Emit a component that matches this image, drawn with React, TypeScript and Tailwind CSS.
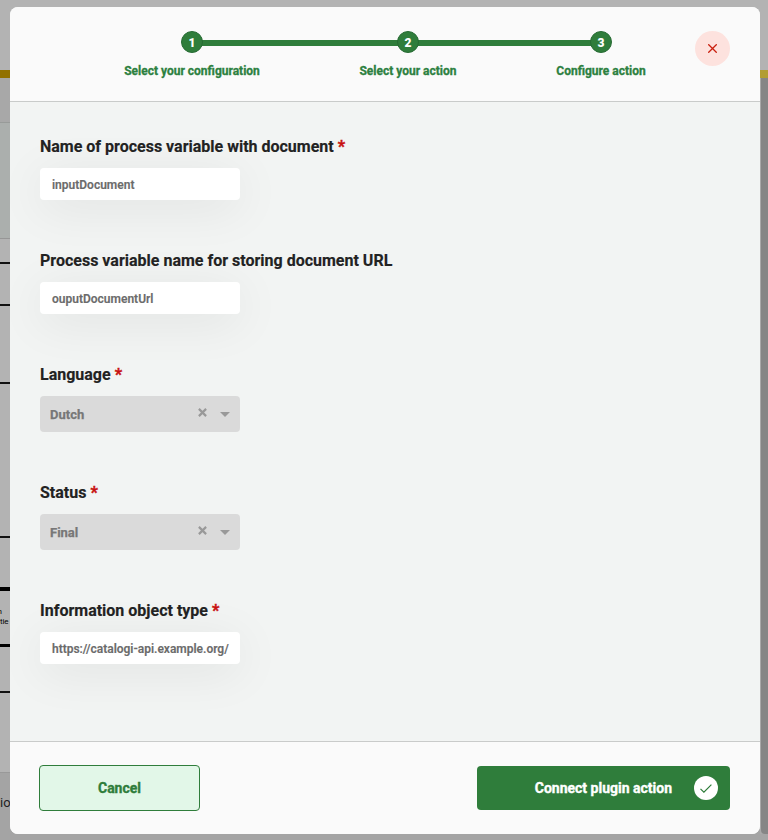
import React from "react";

const Step = ({ n, label, className }: { n: number; label: string; className: string }) => (
  <div className={`relative flex flex-col items-center ${className}`}>
    <div className="flex h-[22px] w-[22px] items-center justify-center rounded-full border border-[#276b34] bg-[#2f7d3b] pt-px text-[12px] leading-none font-black text-white">{n}</div>
    <div className="mt-[10px] text-[12px] leading-4 font-bold whitespace-nowrap text-[#2c8040] [-webkit-text-stroke:0.3px]">{label}</div>
  </div>
);

const Label = ({ text, required }: { text: string; required?: boolean }) => (
  <div className="h-6 pt-px text-[16px] leading-6 font-bold whitespace-nowrap text-[#222] [-webkit-text-stroke:0.15px]">
    <span>{text}</span>
    {required && <span className="ml-1 font-extrabold text-[#c81010] [-webkit-text-stroke:0.4px]">*</span>}
  </div>
);

const Input = ({ value, className = "" }: { value: string; className?: string }) => (
  <div className="mt-[10px] flex h-8 w-[200px] items-center rounded bg-white px-3 shadow-[0_8px_48px_rgba(0,0,0,0.08)]">
    <span className={`pt-px text-[12px] leading-4 font-semibold whitespace-nowrap text-[#6b6b6b] [-webkit-text-stroke:0.15px] ${className}`}>{value}</span>
  </div>
);

const Select = ({ value }: { value: string }) => (
  <div className="mt-[10px] flex h-9 w-[200px] items-center rounded bg-[#dadada] px-[10px]">
    <span className="flex-1 pt-px text-[13px] leading-4 font-bold text-[#777] [-webkit-text-stroke:0.25px]">{value}</span>
    <svg className="mr-[13px] -mt-[3px]" width="9" height="9" viewBox="0 0 9 9" stroke="#999" strokeWidth="2.2">
      <path d="M.9.9l7.2 7.2M8.1.9L.9 8.1" />
    </svg>
    <svg width="10" height="5" viewBox="0 0 10 5" fill="#999">
      <path d="M0 0h10L5 5z" />
    </svg>
  </div>
);

const Backdrop = () => (
  <div className="flex h-full justify-between bg-[#a5a5a5]">
    <div className="flex h-full flex-1 flex-col overflow-hidden bg-[#b3b3b3]">
      <div className="h-[70px] shrink-0" />
      <div className="h-2 shrink-0 bg-[#927100]" />
      <div className="h-[44px] shrink-0 bg-[#a8a8a8]" />
      <div className="h-px shrink-0 bg-[#989b99]" />
      <div className="h-[115px] shrink-0 bg-[#abafad]" />
      <div className="h-px shrink-0 bg-[#969696]" />
      <div className="h-[23px] shrink-0" />
      <div className="h-[2px] shrink-0 bg-[#111]" />
      <div className="h-[40px] shrink-0" />
      <div className="h-[2px] shrink-0 bg-[#111]" />
      <div className="h-[76px] shrink-0" />
      <div className="h-[2px] shrink-0 bg-[#111]" />
      <div className="h-[152px] shrink-0" />
      <div className="h-[2px] shrink-0 bg-[#111]" />
      <div className="h-[49px] shrink-0" />
      <div className="h-[4px] shrink-0 bg-black" />
      <div className="flex h-[53px] shrink-0 flex-col pt-[16px] text-[8px] leading-[10px] text-black">
        <div className="flex w-[2px] justify-end">n</div>
        <div className="w-[9px] -tracking-[0.1px]">tie</div>
      </div>
      <div className="h-[3px] shrink-0 bg-black" />
      <div className="h-[44px] shrink-0" />
      <div className="h-[2px] shrink-0 bg-[#111]" />
      <div className="h-[79px] shrink-0" />
      <div className="h-px shrink-0 bg-[#999]" />
      <div className="flex-1 bg-[#a4a4a4] pt-[22px] text-[13px] leading-4 text-[#222]">io</div>
    </div>
    <div className="flex w-2 flex-col">
      <div className="h-[70px] bg-[#b3b3b3]" />
      <div className="h-2 bg-[#b29d34]" />
      <div className="flex h-[756px] bg-[#a9a9a9] pl-px">
        <div className="flex-1 rounded-bl bg-[#868686]" />
      </div>
    </div>
  </div>
);

export default function App() {
  return (
    <div className="relative h-[840px] w-[768px] overflow-hidden font-['Roboto',sans-serif]">
      <Backdrop />
      <div className="absolute top-[7px] left-[10px] flex h-[827px] w-[750px] flex-col overflow-hidden rounded-lg bg-[#f2f4f3]">
        <header className="flex h-[95px] shrink-0 justify-between border-b border-[#c9cbca] bg-[#fafafa] pt-6 pr-[30px]">
          <div className="relative ml-[113px] flex w-[524px]">
            <div className="absolute top-[9px] right-[46px] left-[68px] h-[6px] bg-[#2f7d3b]" />
            <Step n={1} label="Select your configuration" className="w-[138px]" />
            <Step n={2} label="Select your action" className="ml-[98px] w-[98px]" />
            <Step n={3} label="Configure action" className="ml-[98px] w-[92px]" />
          </div>
          <div className="flex h-[35px] w-[35px] items-center justify-center rounded-full bg-[#fde2de]">
            <svg width="9" height="9" viewBox="0 0 9 9" stroke="#c9200f" strokeWidth="1.3">
              <path d="M.3.3l8.4 8.4M8.7.3L.3 8.7" />
            </svg>
          </div>
        </header>
        <main className="flex-1 px-[30px] pt-8">
          <div className="h-[114px]"><Label text="Name of process variable with document" required /><Input value="inputDocument" /></div>
          <div className="h-[114px]"><Label text="Process variable name for storing document URL" /><Input value="ouputDocumentUrl" /></div>
          <div className="h-[118px]"><Label text="Language" required /><Select value="Dutch" /></div>
          <div className="h-[118px]"><Label text="Status" required /><Select value="Final" /></div>
          <div><Label text="Information object type" required /><Input value="https://catalogi-api.example.org/" className="-tracking-[0.02px]" /></div>
        </main>
        <footer className="flex h-[93px] shrink-0 items-center justify-between border-t border-[#c9cbca] bg-[#fafafa] pr-[30px] pl-[29px]">
          <button className="h-[46px] w-[161px] rounded border border-[#2f7d3b] bg-[#e2f7e8] text-[14px] font-bold text-[#2f7d3b] [-webkit-text-stroke:0.35px]">Cancel</button>
          <button className="flex h-[44px] w-[253px] items-center justify-end rounded bg-[#2f7d3b] pr-3 text-[14px] font-bold text-white [-webkit-text-stroke:0.35px]">
            <span>Connect plugin action</span>
            <span className="ml-[22px] flex h-6 w-6 items-center justify-center rounded-full bg-white">
              <svg width="12" height="9" viewBox="0 0 12 9" fill="none" stroke="#2f7d3b" strokeWidth="1.2"><path d="M.5 4.8l3.4 3.4L11.4.7" /></svg>
            </span>
          </button>
        </footer>
      </div>
    </div>
  );
}
